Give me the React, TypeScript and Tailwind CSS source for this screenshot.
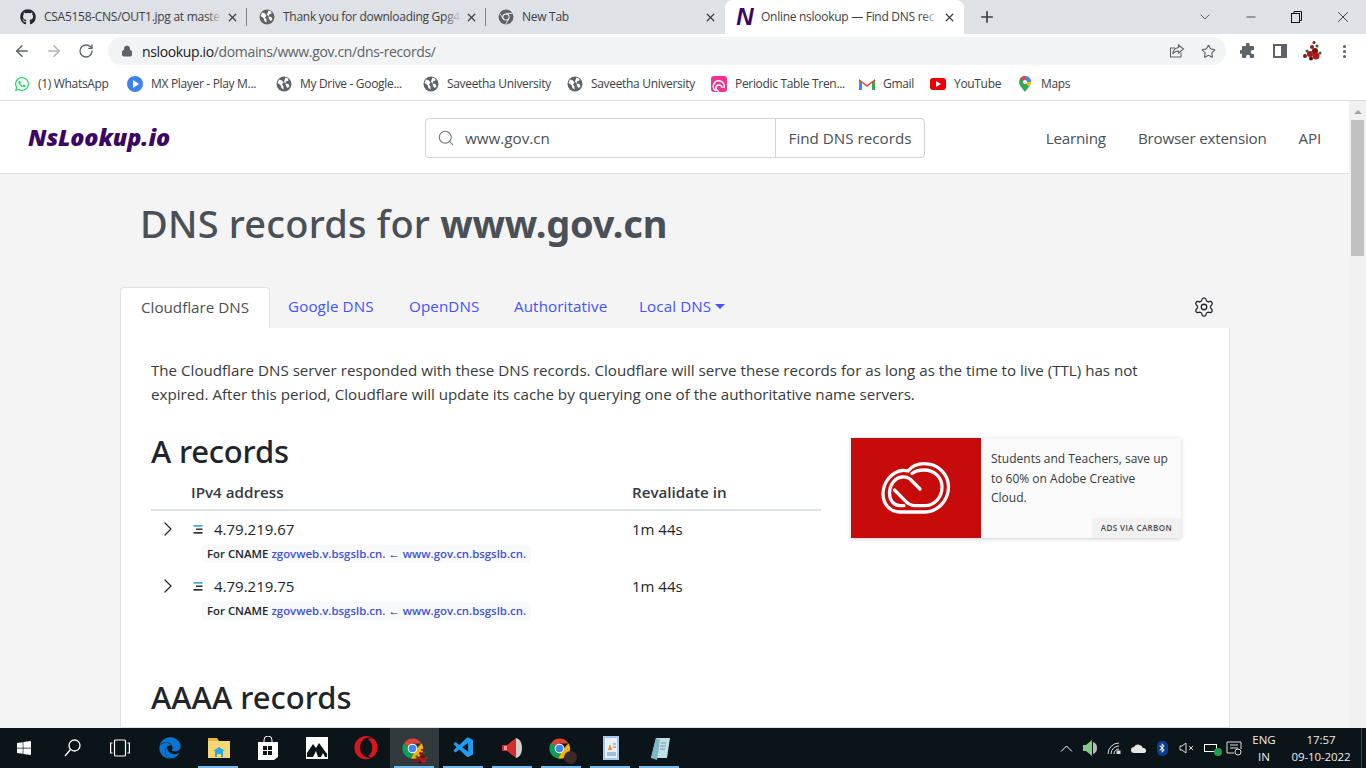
import React from "react";
import { ArrowLeft, ArrowRight, RotateCw, Lock, Star, X, Plus, ChevronDown, Minus, Search, ChevronRight, Settings, EllipsisVertical } from "lucide-react";
import { FaGithub, FaWhatsapp, FaWindows, FaBluetoothB, FaEdge, FaOpera } from "react-icons/fa";
import { VscVscode } from "react-icons/vsc";

const F = "font-['Open_Sans','Noto_Sans',sans-serif]";

function GlobeDark({ size = 16 }: { size?: number }) {
  return (
    <svg width={size} height={size} viewBox="0 0 16 16" className="shrink-0">
      <circle cx="8" cy="8" r="7.500" fill="#5f6368" />
      <path d="M3 3.500l3 1 1.500 2-1.500 2 1.500 2v3l-2-1.500-1-3-3-2zM9.500 1.500l2.500 1 .5 2-2.500 1-.5 2 3 .5 1 2.500-2 1.500-1.500-2-.5-2.500-1.500-2z" fill="#fff" />
    </svg>
  );
}

function ChromeIcon({ size = 16, className = "" }: { size?: number; className?: string }) {
  return (
    <svg width={size} height={size} viewBox="0 0 24 24" className={className}>
      <path d="M12 12L3 7a10.500 10.500 0 0 1 18.400-.2H12z" fill="#db4437" />
      <path d="M3 6.500A10.500 10.500 0 0 0 10.500 22.400L15 14z" fill="#0f9d58" />
      <path d="M21.400 6.500A10.500 10.500 0 0 1 10.500 22.400L15.500 13z" fill="#f4b400" />
      <circle cx="12" cy="12" r="5" fill="#fff" />
      <circle cx="12" cy="12" r="4" fill="#4285f4" />
    </svg>
  );
}

function GrayChrome() {
  return (
    <svg width="16" height="16" viewBox="0 0 16 16">
      <circle cx="8" cy="8" r="7.500" fill="#5f6368" />
      <circle cx="8" cy="8" r="3.600" fill="#fff" />
      <circle cx="8" cy="8" r="2.600" fill="#5f6368" />
      <path d="M8 4.400h6.500M5 9.800L2 4.500M10.800 10l-3.300 5.500" stroke="#fff" strokeWidth="0.800" />
    </svg>
  );
}

function Roses({ size = 22 }: { size?: number }) {
  return (
    <svg width={size} height={size} viewBox="0 0 22 22">
      <circle cx="13" cy="2.500" r="1.500" fill="#8c1414" />
      <circle cx="16" cy="6" r="1.500" fill="#3f5f2a" />
      <circle cx="11" cy="7" r="2" fill="#9e1515" />
      <circle cx="6" cy="11" r="1.500" fill="#3f5f2a" />
      <circle cx="14" cy="11" r="3" fill="#7c1010" />
      <circle cx="9" cy="14" r="3" fill="#a81818" />
      <circle cx="4" cy="16" r="2" fill="#8c1414" />
      <circle cx="15" cy="16" r="3.500" fill="#b01a1a" />
      <circle cx="10" cy="18.500" r="2" fill="#5a0c0c" />
      <circle cx="19" cy="13" r="1.500" fill="#3f5f2a" />
    </svg>
  );
}

function Tab({ icon, title, active, sep }: { icon: React.ReactNode; title: string; active?: boolean; sep?: boolean }) {
  return (
    <div className={`relative flex h-[34px] w-[239px] items-center pl-[12px] pr-[8px] ${active ? "rounded-t-[8px] bg-white" : ""}`}>
      <span className="flex w-[16px] shrink-0 justify-center">{icon}</span>
      <span className="relative ml-[8px] flex min-w-0 flex-1 whitespace-nowrap text-[12px] tracking-[-0.28px] text-[#3c4043]">
        {title}
        <span className={`absolute right-0 top-0 h-full w-[16px] bg-gradient-to-r from-transparent ${active ? "to-white" : "to-[#dee1e6]"}`} />
      </span>
      <X size={13} strokeWidth={2.4} className="ml-[4px] shrink-0 text-[#3c4043]" />
      {sep ? <span className="absolute right-0 top-[8px] h-[18px] w-px bg-[#80868b]" /> : null}
    </div>
  );
}

function Bookmark({ icon, label, w }: { icon: React.ReactNode; label: string; w: string }) {
  return (
    <div className={`flex items-center gap-[8px] ${w}`}>
      <span className="flex w-[16px] shrink-0 justify-center">{icon}</span>
      <span className="whitespace-nowrap text-[12px] tracking-[-0.32px] text-[#3c4043]">{label}</span>
    </div>
  );
}

function CnameRow({ ip }: { ip: string }) {
  return (
    <div className="h-[57px]">
      <div className="flex h-[36px] items-center">
        <ChevronRight size={24} strokeWidth={1.2} className="ml-[5px] text-[#212529]" />
        <svg width="10" height="9" viewBox="0 0 10 9" className="ml-[13px]">
          <rect x="0.500" y="0" width="9" height="1.700" fill="#3fa9d8" />
          <rect x="3" y="3.500" width="6.500" height="1.500" fill="#333" />
          <rect x="0.500" y="7" width="9" height="1.700" fill="#333" />
        </svg>
        <span className="ml-[11px] w-[418px] text-[15px] text-[#212529]">{ip}</span>
        <span className="text-[15px] text-[#212529]">1m 44s</span>
      </div>
      <div className="ml-[51px] mt-[-2px] h-[18px] w-fit whitespace-nowrap rounded-[4px] bg-[#f8f9fa] px-[5px] text-[11.4px] font-semibold leading-[18px] text-[#212529]">
        For CNAME <a className="text-[#3f51d8]">zgovweb.v.bsgslb.cn.</a> ← <a className="text-[#3f51d8]">www.gov.cn.bsgslb.cn.</a>
      </div>
    </div>
  );
}

function TaskItem({ children, under, active }: { children: React.ReactNode; under?: boolean; active?: boolean }) {
  return (
    <div className={`relative flex h-[40px] w-[49px] shrink-0 items-center justify-center ${active ? "bg-[#31393c]" : ""}`}>
      {children}
      {under ? <span className="absolute bottom-0 left-[4px] h-[2px] w-[40px] bg-[#76b9ed]" /> : null}
    </div>
  );
}

function Tray({ children }: { children: React.ReactNode }) {
  return <div className="flex h-[40px] w-[24px] shrink-0 items-center justify-center">{children}</div>;
}

export default function App() {
  return (
    <div className={`flex h-[768px] w-[1366px] flex-col overflow-hidden bg-white ${F}`}>
      {/* Tab strip */}
      <div className="flex h-[34px] shrink-0 items-center bg-[#dee1e6] pl-[8px]">
        <Tab sep icon={<FaGithub size={16} className="text-[#24292f]" />} title="CSA5158-CNS/OUT1.jpg at maste" />
        <Tab sep icon={<GlobeDark />} title="Thank you for downloading Gpg4" />
        <Tab icon={<GrayChrome />} title="New Tab" />
        <Tab active icon={<span className="font-['Liberation_Sans'] text-[24px] font-bold italic leading-none text-[#3b0764]">N</span>} title="Online nslookup — Find DNS rec" />
        <Plus size={18} strokeWidth={2.2} className="ml-[14px] text-[#3c4043]" />
        <div className="ml-auto flex items-center">
          <ChevronDown size={16} strokeWidth={1.2} className="mr-[31px] text-[#3c4043]" />
          <Minus size={14} strokeWidth={1.2} className="mr-[33px] text-[#111]" />
          <svg width="11" height="12" viewBox="0 0 11 12" fill="none" stroke="#111" className="mr-[32px]"><rect x="0.500" y="2.500" width="8" height="9" /><path d="M3 2.500v-2h7.500v9h-2" /></svg>
          <X size={18} strokeWidth={1} className="mr-[14px] text-[#111]" />
        </div>
      </div>

      {/* Toolbar */}
      <div className="flex h-[34px] shrink-0 items-center bg-white">
        <ArrowLeft size={18} strokeWidth={2} className="ml-[13px] text-[#5f6368]" />
        <ArrowRight size={18} strokeWidth={2} className="ml-[14px] text-[#b1b3b6]" />
        <RotateCw size={16} strokeWidth={2} className="ml-[15px] text-[#5f6368]" />
        <div className="ml-[14px] flex h-[28px] w-[1118px] items-center rounded-full bg-[#f1f3f4] pl-[13px] pr-[10px]">
          <Lock size={12} fill="#5f6368" className="text-[#5f6368]" />
          <span className="ml-[9px] text-[14px] tracking-[-0.36px] text-[#5f6368]"><span className="text-[#202124]">nslookup.io</span>/domains/www.gov.cn/dns-records/</span>
          <svg width="16" height="16" viewBox="0 0 16 16" fill="none" stroke="#5f6368" strokeWidth="1.100" className="ml-auto">
            <path d="M12 9.500V14H1.500V5H6" />
            <path d="M9.500 2l5 4-5 4V8C7 8 5 9 3.800 11c.2-3.500 2.400-6 5.700-6.500z" />
          </svg>
          <Star size={15} strokeWidth={1.8} className="ml-[16px] text-[#5f6368]" />
        </div>
        <svg width="16" height="16" viewBox="0 0 16 16" className="ml-[14px]"><path d="M6 1.500a1.800 1.800 0 0 1 3.600 0V3H13a1 1 0 0 1 1 1v3h-1.300a2 2 0 0 0 0 4H14v3a1 1 0 0 1-1 1h-3v-1.300a2 2 0 0 0-4 0V15H3a1 1 0 0 1-1-1v-3.200H1a1.900 1.900 0 0 1 0-3.800h1V4a1 1 0 0 1 1-1h3z" fill="#5f6368" /></svg>
        <div className="ml-[17px] h-[14px] w-[14px] border-[2px] border-r-[6px] border-[#5f6368]" />
        <span className="ml-[14px]"><Roses /></span>
        <EllipsisVertical size={17} strokeWidth={2.4} className="ml-[13px] text-[#5f6368]" />
      </div>

      {/* Bookmarks */}
      <div className="flex h-[33px] shrink-0 items-center border-b border-[#dadce0] bg-white pl-[14px]">
        <Bookmark w="w-[113px]" icon={<FaWhatsapp size={16} className="text-[#25d366]" />} label="(1) WhatsApp" />
        <Bookmark w="w-[149px]" icon={<span className="flex h-[16px] w-[16px] items-center justify-center rounded-full bg-[#3d82f0]"><span className="ml-[2px] h-0 w-0 border-y-[4px] border-l-[6px] border-y-transparent border-l-white" /></span>} label="MX Player - Play M..." />
        <Bookmark w="w-[147px]" icon={<GlobeDark />} label="My Drive - Google..." />
        <Bookmark w="w-[144px]" icon={<GlobeDark />} label="Saveetha University" />
        <Bookmark w="w-[144px]" icon={<GlobeDark />} label="Saveetha University" />
        <Bookmark w="w-[148px]" icon={<svg width="16" height="16" viewBox="0 0 16 16"><rect width="16" height="16" rx="3" fill="#f5338f" /><path d="M5 15a5.500 5.500 0 1 1 8-3M8 15a3 3 0 1 1 3-3" fill="none" stroke="#fff" strokeWidth="1.600" /></svg>} label="Periodic Table Tren..." />
        <Bookmark w="w-[71px]" icon={<svg width="16" height="12" viewBox="0 0 16 12"><path d="M0 12V1l8 6 8-6v11h-3V5L8 9 3 5v7z" fill="#ea4335" /><path d="M0 12V3l3 2v7z" fill="#4285f4" /><path d="M16 12V3l-3 2v7z" fill="#34a853" /></svg>} label="Gmail" />
        <Bookmark w="w-[87px]" icon={<span className="flex h-[12px] w-[16px] items-center justify-center rounded-[3px] bg-[#e00]"><span className="ml-px h-0 w-0 border-y-[3px] border-l-[5px] border-y-transparent border-l-white" /></span>} label="YouTube" />
        <Bookmark w="w-[60px]" icon={<svg width="12" height="16" viewBox="0 0 12 16"><path d="M6 0a6 6 0 0 1 6 6c0 3-3 6-6 10C3 12 0 9 0 6a6 6 0 0 1 6-6z" fill="#34a853" /><path d="M1 2.500A6 6 0 0 1 6 0v6z" fill="#ea4335" /><path d="M6 0a6 6 0 0 1 6 6H6z" fill="#4285f4" /><path d="M12 6c0 2-1 3-2 5L6 6z" fill="#fbbc04" /><circle cx="6" cy="6" r="2" fill="#fff" /></svg>} label="Maps" />
      </div>

      {/* Viewport */}
      <div className="flex min-h-0 flex-1">
        <div className="min-w-0 flex-1 overflow-hidden bg-[#f4f4f4]">
          <header className="flex h-[73px] items-center border-b border-[#dfdfdf] bg-white pt-[2px]">
            <div className="ml-[28px] w-[397px] text-[23.4px] font-extrabold italic leading-none tracking-[-0.1px] text-[#3b0764]">NsLookup.io</div>
            <div className="flex h-[40px] w-[500px] items-center rounded-[4px] border border-[#ced4da] bg-white">
              <Search size={18} strokeWidth={1.4} className="ml-[11px] text-[#6c757d]" />
              <span className="ml-[10px] flex-1 text-[15.2px] text-[#495057]">www.gov.cn</span>
              <div className="flex h-full w-[149px] items-center justify-center border-l border-[#ced4da] text-[15.2px] text-[#495057]">Find DNS records</div>
            </div>
            <nav className="ml-auto mr-[28px] flex gap-[32px] text-[15.2px] tracking-[-0.2px] text-[#495057]">
              <span>Learning</span><span>Browser extension</span><span>API</span>
            </nav>
          </header>

          <div className="pl-[120px] pr-[119px]">
            <h1 className="ml-[20px] pt-[23px] font-['Noto_Sans',sans-serif] text-[38px] font-medium leading-[52px] tracking-[0.2px] text-[#495057]">DNS records for <b className="font-bold tracking-[-0.2px]">www.gov.cn</b></h1>

            <div className="mt-[38px] flex h-[41px] items-end text-[15.2px] tracking-[0.1px] text-[#4353ff]">
              <div className="flex h-[41px] w-[150px] items-center justify-center rounded-t-[4px] border border-b-0 border-[#dee2e6] bg-white pb-[1px] tracking-normal text-[#495057]">Cloudflare DNS</div>
              <span className="mb-[10px] ml-[18px] w-[87px]">Google DNS</span>
              <span className="mb-[10px] ml-[34px] w-[71px]">OpenDNS</span>
              <span className="mb-[10px] ml-[34px] w-[91px]">Authoritative</span>
              <span className="mb-[10px] ml-[34px] flex items-center">Local DNS<span className="ml-[4px] h-0 w-0 border-x-[5px] border-t-[5px] border-x-transparent border-t-[#4353ff]" /></span>
              <Settings size={22} strokeWidth={1.4} className="mb-[10px] ml-auto mr-[15px] text-[#212529]" />
            </div>

            <div className="h-[400px] border border-t-0 border-[#dee2e6] bg-white pl-[30px] pr-[30px] pt-[30px]">
              <p className="text-[15.15px] leading-[24px] text-[#343a40]">The Cloudflare DNS server responded with these DNS records. Cloudflare will serve these records for as long as the time to live (TTL) has not expired. After this period, Cloudflare will update its cache by querying one of the authoritative name servers.</p>
              <div className="mt-[21px] flex">
                <div className="w-[670px]">
                  <h2 className="font-['Noto_Sans',sans-serif] text-[31px] font-medium leading-[48px] tracking-[-0.2px] text-[#212529]">A records</h2>
                  <div className="flex h-[36px] items-center border-b-2 border-[#dee2e6] text-[15.2px] font-semibold text-[#343a40]">
                    <span className="ml-[40px] w-[441px]">IPv4 address</span>
                    <span>Revalidate in</span>
                  </div>
                  <CnameRow ip="4.79.219.67" />
                  <CnameRow ip="4.79.219.75" />
                  <h2 className="mt-[49px] font-['Noto_Sans',sans-serif] text-[31px] font-medium leading-[47px] text-[#212529]">AAAA records</h2>
                </div>
                <div className="ml-[30px] mt-[11px] flex h-[100px] w-[330px] bg-[#fafafa] shadow-[0_1px_4px_rgba(0,0,0,0.2)]">
                  <div className="flex h-[100px] w-[130px] items-center justify-center bg-[#c70a0a]">
                    <svg width="70" height="52" viewBox="0 0 70 52" fill="none" stroke="#fff" strokeWidth="3.300" strokeLinecap="round">
                      <path d="M27 9C31 4 37 1.700 43 1.700C57 1.700 67.500 12 67.500 25C67.500 39 56 50 44 50L19 50C9 50 2 42 2 32C2 20 11 10 21 8.500C23 8.300 25 8.500 27 9Z" />
                      <path d="M31 11.500C34 9 39 8 43 8C54 8 61 16 61 25C61 36 53 43.700 44 43.700L34 43.700C30 43.700 28 42.700 25 39.700L13.500 28" />
                      <path d="M39 27L29 17C27 15.500 24 14.800 21 15C14 15.500 8.500 23 8.500 31C8.500 38.500 13 43.700 19 43.700L23 43.700" />
                    </svg>
                  </div>
                  <div className="relative flex-1 pl-[10px] pr-[8px] pt-[11px] text-[12px] leading-[19.500px] text-[#343a40]">
                    Students and Teachers, save up to 60% on Adobe Creative Cloud.
                    <div className="absolute bottom-0 right-0 flex h-[20px] w-[89px] items-center justify-center bg-[#f1f1f2] text-[8px] font-semibold tracking-[0.4px] text-[#4a4a4a]">ADS VIA CARBON</div>
                  </div>
                </div>
              </div>
            </div>
          </div>
        </div>
        {/* Scrollbar */}
        <div className="w-[17px] shrink-0 bg-[#f1f1f1]">
          <div className="mx-auto mt-[9px] h-0 w-0 border-x-[4px] border-b-[4px] border-x-transparent border-b-[#a3a3a3]" />
          <div className="ml-[2px] mt-[6px] h-[136px] w-[13px] bg-[#c1c1c1]" />
        </div>
      </div>

      {/* Taskbar */}
      <div className="flex h-[40px] shrink-0 items-center bg-[#0b1418] text-white">
        <div className="flex h-[40px] w-[48px] items-center justify-center"><FaWindows size={16} className="text-white" /></div>
        <div className="flex h-[40px] w-[48px] items-center justify-center">
          <svg width="17" height="18" viewBox="0 0 17 18" fill="none" stroke="#fff" strokeWidth="1.300"><circle cx="10.500" cy="6.500" r="5.500" /><path d="M6.500 10.500L1 17" /></svg>
        </div>
        <div className="flex h-[40px] w-[48px] items-center justify-center">
          <svg width="20" height="18" viewBox="0 0 20 18" fill="none" stroke="#fff" strokeWidth="1.200"><rect x="4.500" y="1" width="11" height="16" rx="1" /><path d="M2.500 4H.6v10h1.900M17.500 4h1.900v10h-1.900" /></svg>
        </div>
        <div className="w-px" />
        <TaskItem><FaEdge size={22} className="text-[#0b74d1]" /></TaskItem>
        <TaskItem under>
          <svg width="22" height="20" viewBox="0 0 22 20"><path d="M0 3h22v17H0z" fill="#f7d774" /><path d="M0 0h9l2 3H0z" fill="#e8b93f" /><path d="M7 19v-6l-2 0 6-4 6 4h-2v6h-2v-3H9v3z" fill="#2aa8e8" /></svg>
        </TaskItem>
        <TaskItem>
          <svg width="20" height="24" viewBox="0 0 20 24"><path d="M6 6V4a4 4 0 0 1 8 0v2" fill="none" stroke="#fff" /><path d="M0 6h20v15l-4 3H0z" fill="#fff" /><path d="M5 10h4v4H5zM10 10h4v4h-4zM5 15h4v4H5zM10 15h4v4h-4z" fill="#0b1418" /></svg>
        </TaskItem>
        <TaskItem>
          <svg width="22" height="22" viewBox="0 0 22 22"><rect width="22" height="22" fill="#fff" /><path d="M1 20V16L7 7l3 4 3-5 8 11v3z" fill="#0b1418" /><path d="M7 20l3-6 2 6zM15 20l2-4 2 4z" fill="#fff" /></svg>
        </TaskItem>
        <TaskItem><FaOpera size={24} className="text-[#d9161e]" /></TaskItem>
        <TaskItem active under>
          <ChromeIcon size={23} className="-translate-x-[2px]" />
          <span className="absolute bottom-[3px] right-[10px]"><Roses size={17} /></span>
        </TaskItem>
        <TaskItem under><VscVscode size={24} className="text-[#1f9cf0]" /></TaskItem>
        <TaskItem under>
          <svg width="24" height="26" viewBox="0 0 24 26"><path d="M1 10h5L15 3v20l-9-7H1z" fill="#d52b2b" /><path d="M15 3c4 1 6 5 6 10s-2 9-6 10z" fill="#cfcfcf" /><path d="M3 11h3v4H3z" fill="#f39a9a" /></svg>
        </TaskItem>
        <TaskItem under>
          <ChromeIcon size={23} className="-translate-x-[2px]" />
          <span className="absolute bottom-[4px] right-[9px] h-[13px] w-[13px] rounded-full bg-[#3a2a2a]" />
        </TaskItem>
        <TaskItem under>
          <svg width="20" height="26" viewBox="0 0 20 26"><path d="M2 1h16v24H2z" fill="#a9c7e8" /><path d="M4 3h12v20H4z" fill="#e8f0f8" /><path d="M7 15l2-6 2 6z" fill="#f08c1a" /><path d="M12 9h3M12 12h3M6 18h9M6 20h9" stroke="#5b8fc7" /></svg>
        </TaskItem>
        <TaskItem under>
          <svg width="22" height="24" viewBox="0 0 22 24"><path d="M7 2h14l-3 20H2z" fill="#bfe0e8" /><path d="M7 2l4 2-3 20-6-2z" fill="#7fb7c4" /><path d="M12 7h5M11 10h6M11 13h5" stroke="#6f9aa6" /></svg>
        </TaskItem>

        <div className="ml-auto flex items-center">
          <Tray><svg width="13" height="7" viewBox="0 0 13 7" fill="none" stroke="#fff"><path d="M1 6.500l5.500-5.500 5.500 5.500" /></svg></Tray>
          <Tray><svg width="15" height="16" viewBox="0 0 15 16"><path d="M0 5h3l6-5v16l-6-5H0z" fill="#86c986" /><path d="M10 2c3 1 4 3 4 6s-1 5-4 6z" fill="#bbb" /></svg></Tray>
          <Tray><svg width="14" height="12" viewBox="0 0 14 12" fill="none" stroke="#ddd"><path d="M1 12a11 11 0 0 1 11-11M4 12a8 8 0 0 1 8-8M7 12a5 5 0 0 1 5-5" /><rect x="10" y="9" width="3" height="3" fill="#ddd" /></svg></Tray>
          <Tray><svg width="17" height="10" viewBox="0 0 17 10"><path d="M4 10a3 3 0 0 1 0-6 5 5 0 0 1 9 1 2.500 2.500 0 0 1 1 5z" fill="#e6e6e6" /></svg></Tray>
          <Tray><span className="flex h-[15px] w-[11px] items-center justify-center rounded-[5px] bg-[#0a3d91]"><FaBluetoothB size={10} className="text-white" /></span></Tray>
          <Tray><svg width="15" height="12" viewBox="0 0 15 12" fill="none" stroke="#ddd"><path d="M1 4h2l4-3v10L3 8H1zM10 4l4 4M14 4l-4 4" /></svg></Tray>
          <Tray><div className="relative h-[8px] w-[13px] border border-white"><span className="absolute -bottom-[5px] -right-[6px] h-[8px] w-[8px] rounded-full bg-[#1aa04a]" /></div></Tray>
          <Tray><svg width="16" height="15" viewBox="0 0 16 15" fill="none" stroke="#ddd"><path d="M8 12H1V1h14v7M4 4h8M4 7h8" /><circle cx="12" cy="11" r="3" /></svg></Tray>
          <div className="ml-[6px] w-[24px] text-center text-[11.5px] leading-[17px] text-[#eee]">ENG<br />IN</div>
          <div className="ml-[10px] w-[70px] whitespace-nowrap text-center text-[11.5px] leading-[17px] tracking-[-0.1px] text-[#eee]">17:57<br />09-10-2022</div>
          <div className="ml-[5px] h-[40px] w-px bg-[#3a4246]" />
          <div className="w-[4px]" />
        </div>
      </div>
    </div>
  );
}
